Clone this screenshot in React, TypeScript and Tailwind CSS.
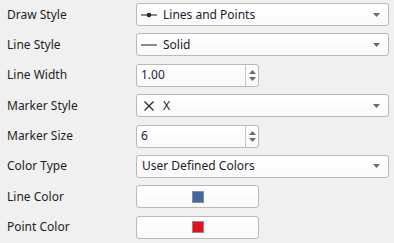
import React from 'react';

// Property rows of a plot series editor
type Row =
    | { label: string; kind: 'select'; value: string; icon?: 'linepoint' | 'line' | 'cross' }
    | { label: string; kind: 'spin'; value: string }
    | { label: string; kind: 'color'; color: string };

const rows: Row[] = [
    { label: 'Draw Style', kind: 'select', value: 'Lines and Points', icon: 'linepoint' },
    { label: 'Line Style', kind: 'select', value: 'Solid', icon: 'line' },
    { label: 'Line Width', kind: 'spin', value: '1.00' },
    { label: 'Marker Style', kind: 'select', value: 'X', icon: 'cross' },
    { label: 'Marker Size', kind: 'spin', value: '6' },
    { label: 'Color Type', kind: 'select', value: 'User Defined Colors' },
    { label: 'Line Color', kind: 'color', color: '#4068a6' },
    { label: 'Point Color', kind: 'color', color: '#e8101f' },
];

function Icon({ type }: { type: 'linepoint' | 'line' | 'cross' }) {
    if (type === 'cross') {
        return (
            <svg width="16" height="12" viewBox="0 0 16 12" className="shrink-0">
                <path d="M3.5 1.5l9 9M12.5 1.5l-9 9" stroke="#2a2a2a" strokeWidth="1.3" />
            </svg>
        );
    }
    return (
        <svg width="16" height="12" viewBox="0 0 16 12" className="shrink-0">
            <path d="M0 6h16" stroke="#6e6e6e" strokeWidth="1.6" />
            {type === 'linepoint' && <circle cx="8" cy="6" r="2.3" fill="#2a2a2a" />}
        </svg>
    );
}

const box =
    'h-[23px] border border-[#b9b9b9] rounded-[3px] bg-gradient-to-b from-white to-[#f9f9f9]';

export default function App() {
    return (
        <div
            className="w-[394px] h-[243px] bg-[#f0f0f0] flex flex-col gap-[7.4px] pt-[3px] text-[12px] text-[#1e1e1e]"
            style={{ fontFamily: '"Noto Sans", sans-serif' }}
        >
            {rows.map((row) => (
                <div key={row.label} className="flex items-center h-[23px]">
                    <div className="w-[136px] pl-[7px] leading-none">{row.label}</div>

                    {row.kind === 'select' && (
                        <div className={`${box} w-[253px] flex items-center pl-[4px] pr-[8px]`}>
                            {row.icon ? (
                                <>
                                    <Icon type={row.icon} />
                                    <span className="ml-[6px] text-[#1c1c2e] leading-none">{row.value}</span>
                                </>
                            ) : (
                                <span className="ml-[1px] text-[#1c1c2e] leading-none">{row.value}</span>
                            )}
                            <svg width="7" height="4" viewBox="0 0 7 4" className="ml-auto">
                                <path d="M0 0h7L3.5 4z" fill="#6a6a6a" />
                            </svg>
                        </div>
                    )}

                    {row.kind === 'spin' && (
                        <div className={`${box} w-[123px] flex items-stretch`}>
                            <div className="flex-1 flex items-center pl-[4px] text-[#1c1c3a] leading-none">{row.value}</div>
                            <div className="w-[13px] border-l border-[#c4c4c4] flex flex-col items-center justify-center gap-[3px]">
                                <svg width="7" height="4" viewBox="0 0 7 4">
                                    <path d="M0 4h7L3.5 0z" fill="#6a6a6a" />
                                </svg>
                                <svg width="7" height="4" viewBox="0 0 7 4">
                                    <path d="M0 0h7L3.5 4z" fill="#6a6a6a" />
                                </svg>
                            </div>
                        </div>
                    )}

                    {row.kind === 'color' && (
                        <div className={`${box} w-[123px] flex items-center justify-center`}>
                            <div
                                className="w-[12px] h-[12px] border border-[#8c8c8c]"
                                style={{ backgroundColor: row.color }}
                            />
                        </div>
                    )}
                </div>
            ))}
        </div>
    );
}
